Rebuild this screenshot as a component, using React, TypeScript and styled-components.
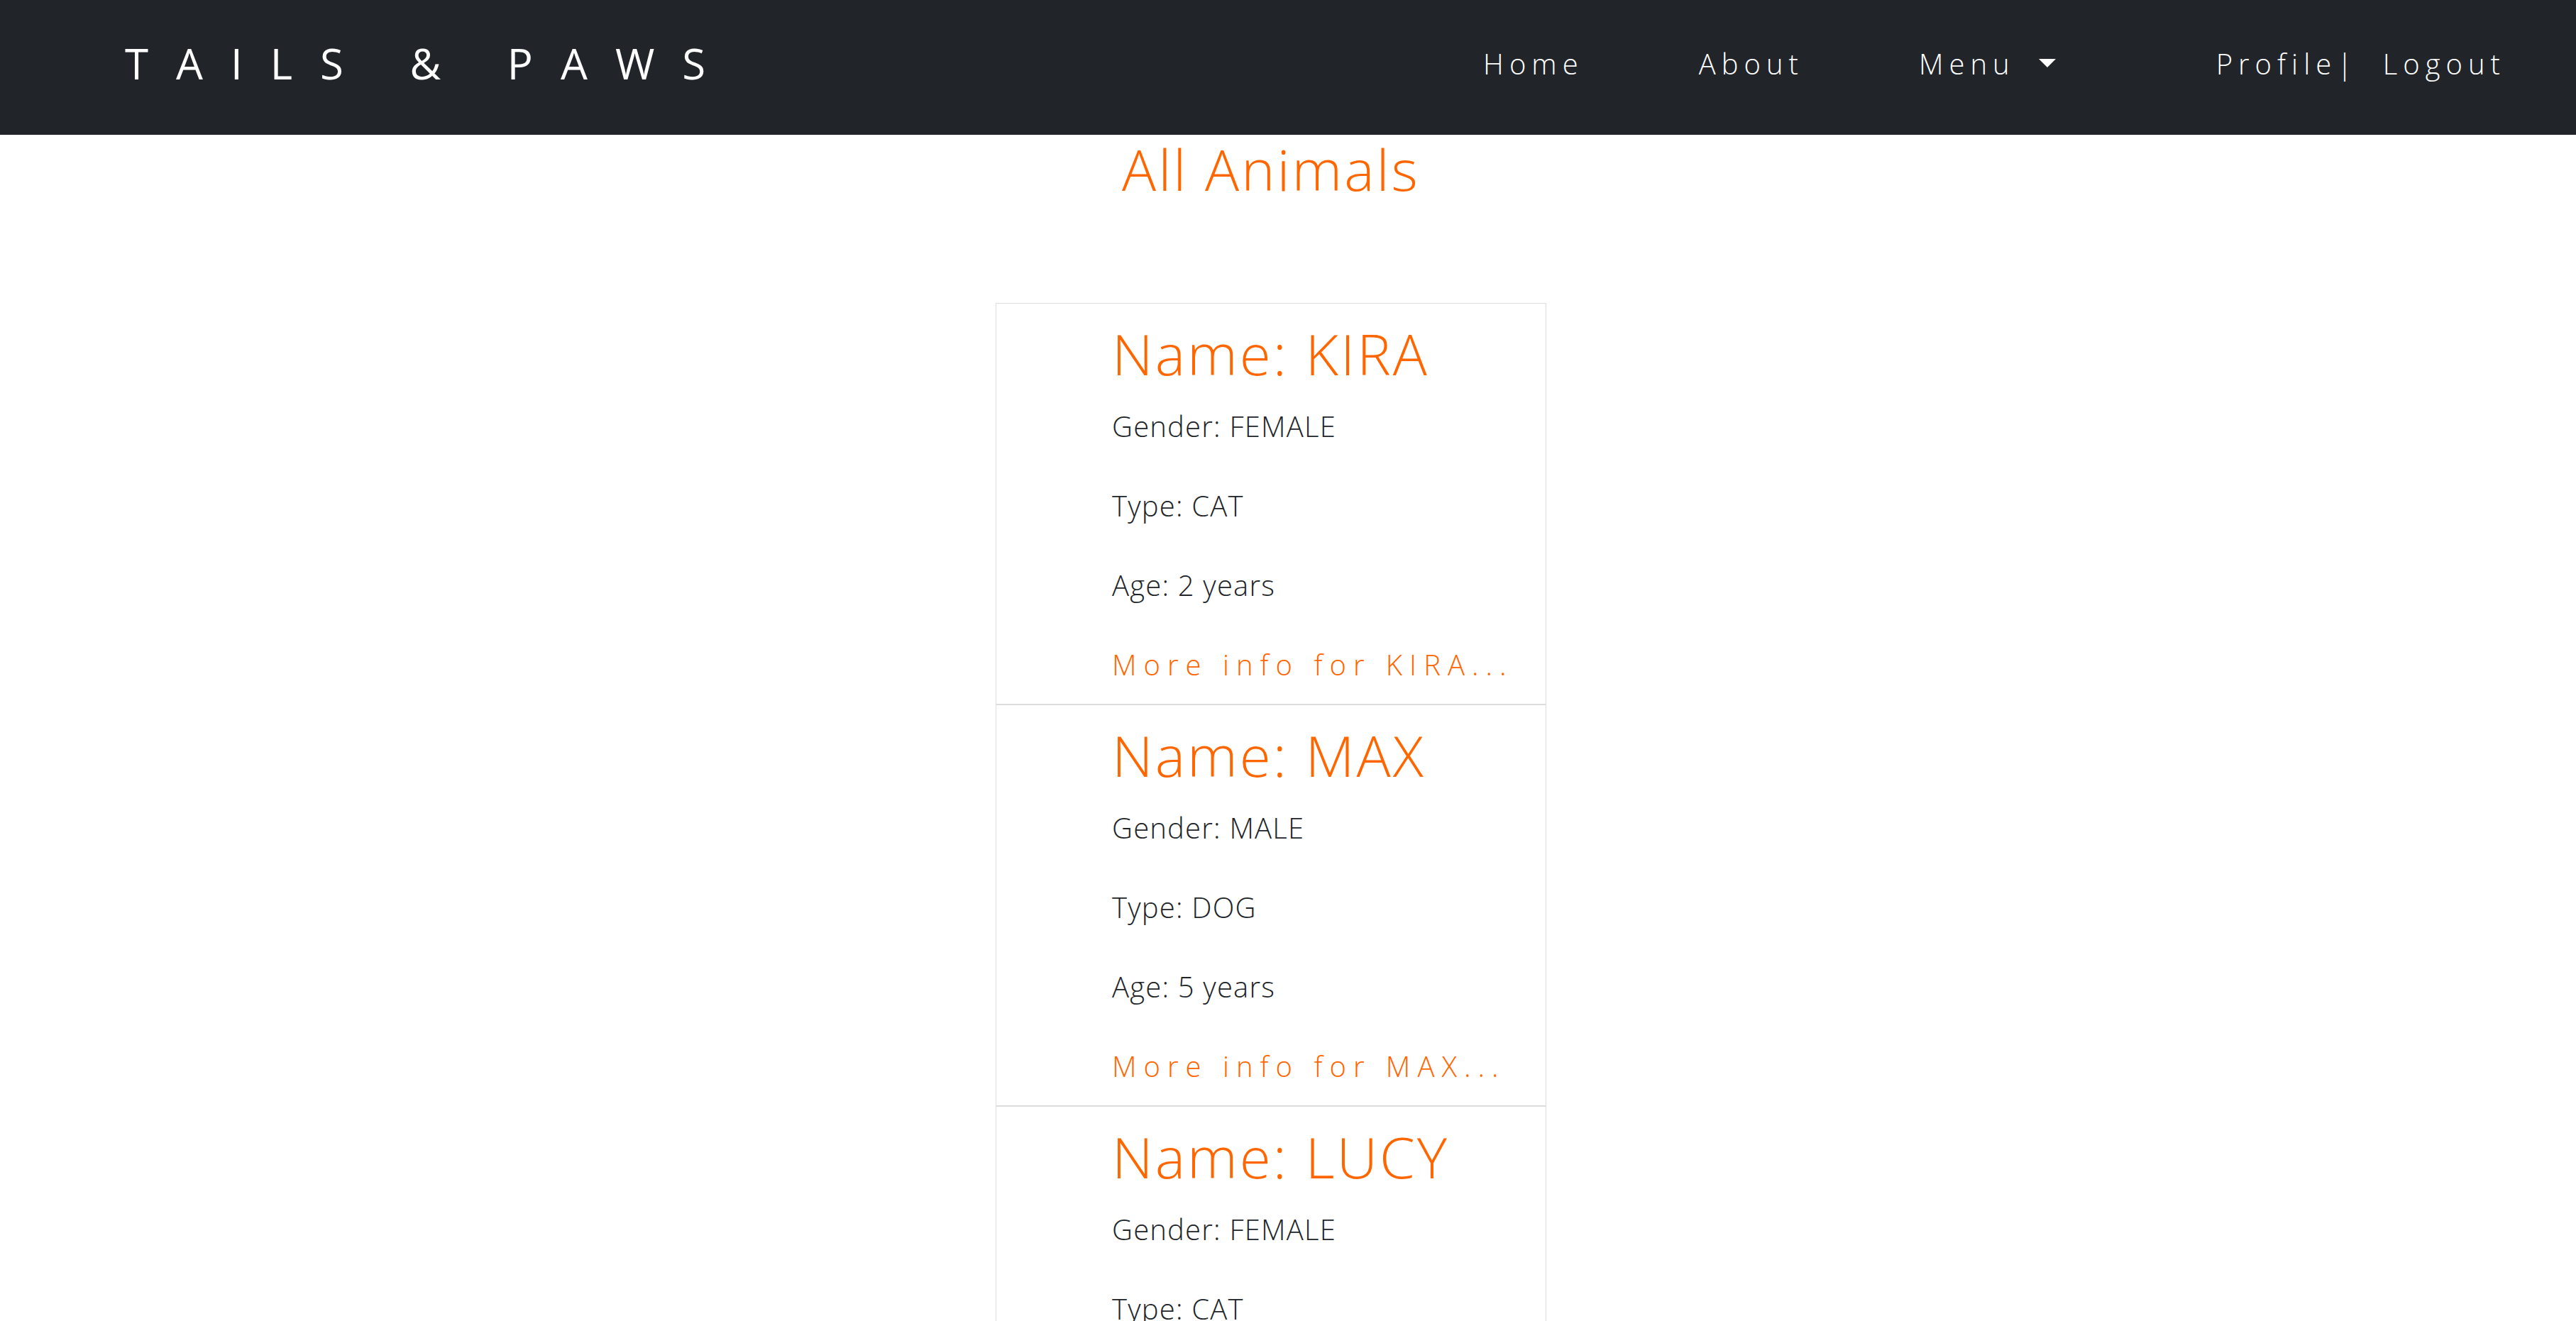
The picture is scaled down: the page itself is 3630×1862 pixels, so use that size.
import React from "react";
import styled, { createGlobalStyle } from "styled-components";

const GlobalStyle = createGlobalStyle`
  html, body { margin: 0; padding: 0; background: #ffffff; }
  body {
    font-family: "Open Sans", "Noto Sans", sans-serif;
    font-weight: 300;
    color: #212529;
  }
  * { box-sizing: border-box; }
`;

const NavBar = styled.header`
  height: 190px;
  background: #212529;
  display: flex;
  align-items: center;
  padding: 0 107px 12px 176px;
`;

const Brand = styled.a`
  color: #ffffff;
  font-size: 60px;
  font-weight: 400;
  letter-spacing: 39px;
  text-decoration: none;
  white-space: pre;
  margin-right: -39px;
`;

const NavList = styled.nav`
  margin-left: auto;
  display: flex;
  align-items: center;
`;

const NavLink = styled.a<{ $space: number }>`
  color: #ffffff;
  font-size: 40px;
  letter-spacing: 8px;
  margin-left: ${(p) => p.$space}px;
  margin-right: -8px;
  text-decoration: none;
  display: inline-flex;
  align-items: center;
  white-space: pre;
`;

const Caret = styled.span`
  display: inline-block;
  margin-left: 33px;
  width: 0;
  height: 0;
  border-top: 12px solid #ffffff;
  border-left: 12px solid transparent;
  border-right: 12px solid transparent;
`;

const Main = styled.main`
  display: flex;
  flex-direction: column;
  align-items: center;
  padding-right: 48px;
`;

const Title = styled.h1`
  margin: 0;
  font-size: 80px;
  line-height: 96px;
  font-weight: 300;
  letter-spacing: 3px;
  color: #ff6600;
`;

const CardList = styled.section`
  margin-top: 141px;
  width: 776px;
  display: flex;
  flex-direction: column;
`;

const Card = styled.article`
  border: 1px solid #dddddd;
  padding: 22px 20px 25px 163px;
`;

const Name = styled.h2`
  margin: 0 0 25px;
  font-size: 80px;
  line-height: 96px;
  font-weight: 300;
  letter-spacing: 3px;
  color: #ff6600;
  white-space: nowrap;
`;

const Detail = styled.p`
  margin: 0 0 52px;
  font-size: 40px;
  line-height: 60px;
  letter-spacing: 1.2px;
  white-space: nowrap;
`;

const MoreLink = styled.a`
  display: block;
  font-size: 40px;
  line-height: 60px;
  letter-spacing: 10px;
  color: #ff6600;
  text-decoration: none;
  white-space: nowrap;
`;

const animals = [
  { name: "KIRA", gender: "FEMALE", type: "CAT", age: 2 },
  { name: "MAX", gender: "MALE", type: "DOG", age: 5 },
  { name: "LUCY", gender: "FEMALE", type: "CAT", age: 3 },
];

export default function App() {
  return (
    <>
      <GlobalStyle />
      <NavBar>
        <Brand href="#">TAILS &amp; PAWS</Brand>
        <NavList>
          <NavLink $space={0} href="#">Home</NavLink>
          <NavLink $space={170} href="#">About</NavLink>
          <NavLink $space={170} href="#">
            Menu
            <Caret />
          </NavLink>
          <NavLink $space={234} href="#">Profile|</NavLink>
          <NavLink $space={43} href="#">Logout</NavLink>
        </NavList>
      </NavBar>
      <Main>
        <Title>All Animals</Title>
        <CardList>
          {animals.map((a) => (
            <Card key={a.name}>
              <Name>Name: {a.name}</Name>
              <Detail>Gender: {a.gender}</Detail>
              <Detail>Type: {a.type}</Detail>
              <Detail>Age: {a.age} years</Detail>
              <MoreLink href="#">More info for {a.name}...</MoreLink>
            </Card>
          ))}
        </CardList>
      </Main>
    </>
  );
}
